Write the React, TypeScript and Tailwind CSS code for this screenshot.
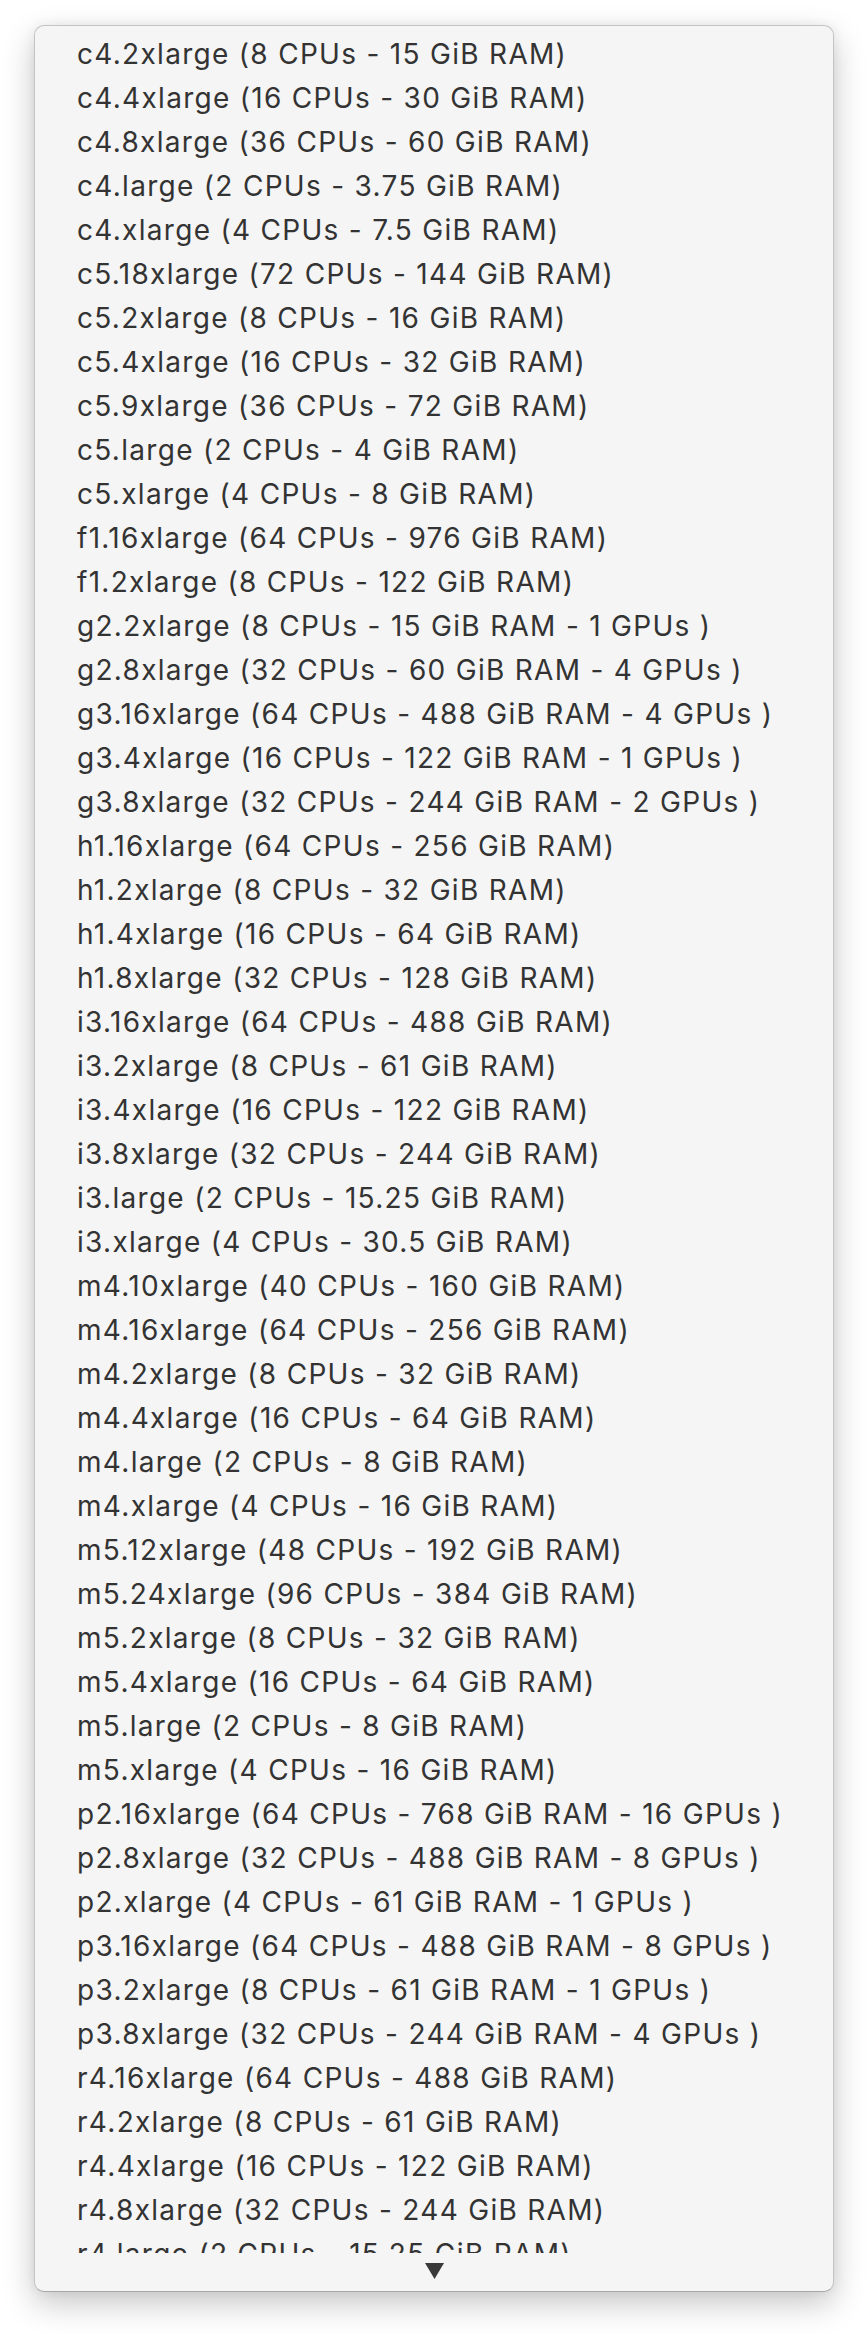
import React from 'react';

const instanceTypes = [
  'c4.2xlarge (8 CPUs - 15 GiB RAM)',
  'c4.4xlarge (16 CPUs - 30 GiB RAM)',
  'c4.8xlarge (36 CPUs - 60 GiB RAM)',
  'c4.large (2 CPUs - 3.75 GiB RAM)',
  'c4.xlarge (4 CPUs - 7.5 GiB RAM)',
  'c5.18xlarge (72 CPUs - 144 GiB RAM)',
  'c5.2xlarge (8 CPUs - 16 GiB RAM)',
  'c5.4xlarge (16 CPUs - 32 GiB RAM)',
  'c5.9xlarge (36 CPUs - 72 GiB RAM)',
  'c5.large (2 CPUs - 4 GiB RAM)',
  'c5.xlarge (4 CPUs - 8 GiB RAM)',
  'f1.16xlarge (64 CPUs - 976 GiB RAM)',
  'f1.2xlarge (8 CPUs - 122 GiB RAM)',
  'g2.2xlarge (8 CPUs - 15 GiB RAM - 1 GPUs )',
  'g2.8xlarge (32 CPUs - 60 GiB RAM - 4 GPUs )',
  'g3.16xlarge (64 CPUs - 488 GiB RAM - 4 GPUs )',
  'g3.4xlarge (16 CPUs - 122 GiB RAM - 1 GPUs )',
  'g3.8xlarge (32 CPUs - 244 GiB RAM - 2 GPUs )',
  'h1.16xlarge (64 CPUs - 256 GiB RAM)',
  'h1.2xlarge (8 CPUs - 32 GiB RAM)',
  'h1.4xlarge (16 CPUs - 64 GiB RAM)',
  'h1.8xlarge (32 CPUs - 128 GiB RAM)',
  'i3.16xlarge (64 CPUs - 488 GiB RAM)',
  'i3.2xlarge (8 CPUs - 61 GiB RAM)',
  'i3.4xlarge (16 CPUs - 122 GiB RAM)',
  'i3.8xlarge (32 CPUs - 244 GiB RAM)',
  'i3.large (2 CPUs - 15.25 GiB RAM)',
  'i3.xlarge (4 CPUs - 30.5 GiB RAM)',
  'm4.10xlarge (40 CPUs - 160 GiB RAM)',
  'm4.16xlarge (64 CPUs - 256 GiB RAM)',
  'm4.2xlarge (8 CPUs - 32 GiB RAM)',
  'm4.4xlarge (16 CPUs - 64 GiB RAM)',
  'm4.large (2 CPUs - 8 GiB RAM)',
  'm4.xlarge (4 CPUs - 16 GiB RAM)',
  'm5.12xlarge (48 CPUs - 192 GiB RAM)',
  'm5.24xlarge (96 CPUs - 384 GiB RAM)',
  'm5.2xlarge (8 CPUs - 32 GiB RAM)',
  'm5.4xlarge (16 CPUs - 64 GiB RAM)',
  'm5.large (2 CPUs - 8 GiB RAM)',
  'm5.xlarge (4 CPUs - 16 GiB RAM)',
  'p2.16xlarge (64 CPUs - 768 GiB RAM - 16 GPUs )',
  'p2.8xlarge (32 CPUs - 488 GiB RAM - 8 GPUs )',
  'p2.xlarge (4 CPUs - 61 GiB RAM - 1 GPUs )',
  'p3.16xlarge (64 CPUs - 488 GiB RAM - 8 GPUs )',
  'p3.2xlarge (8 CPUs - 61 GiB RAM - 1 GPUs )',
  'p3.8xlarge (32 CPUs - 244 GiB RAM - 4 GPUs )',
  'r4.16xlarge (64 CPUs - 488 GiB RAM)',
  'r4.2xlarge (8 CPUs - 61 GiB RAM)',
  'r4.4xlarge (16 CPUs - 122 GiB RAM)',
  'r4.8xlarge (32 CPUs - 244 GiB RAM)',
  'r4.large (2 CPUs - 15.25 GiB RAM)',
];

export default function App() {
  return (
    <div className="min-h-screen bg-white pt-[25px] px-[34px]">
      <div className="flex h-[2267px] flex-col rounded-[10px] border border-[#c4c4c4] border-b-[#a8a8a8] bg-[#f5f5f5] shadow-[0_12px_32px_rgba(0,0,0,0.22),0_0_12px_rgba(0,0,0,0.06)]">
        {/* options, the last one cut off above the scroll arrow */}
        <ul className="flex-1 overflow-hidden pt-[6px] pl-[42px] font-['Inter',sans-serif] text-[28px] leading-[44px] tracking-[1.3px] text-[#333333]">
          {instanceTypes.map((t) => (
            <li key={t} className="h-[44px] whitespace-nowrap">
              {t}
            </li>
          ))}
        </ul>
        <div className="flex h-[38px] shrink-0 justify-center pt-[10px]">
          <svg width="19" height="16" viewBox="0 0 19 16">
            <polygon points="0,0 19,0 9.5,16" fill="#3a3a3a" />
          </svg>
        </div>
      </div>
    </div>
  );
}
